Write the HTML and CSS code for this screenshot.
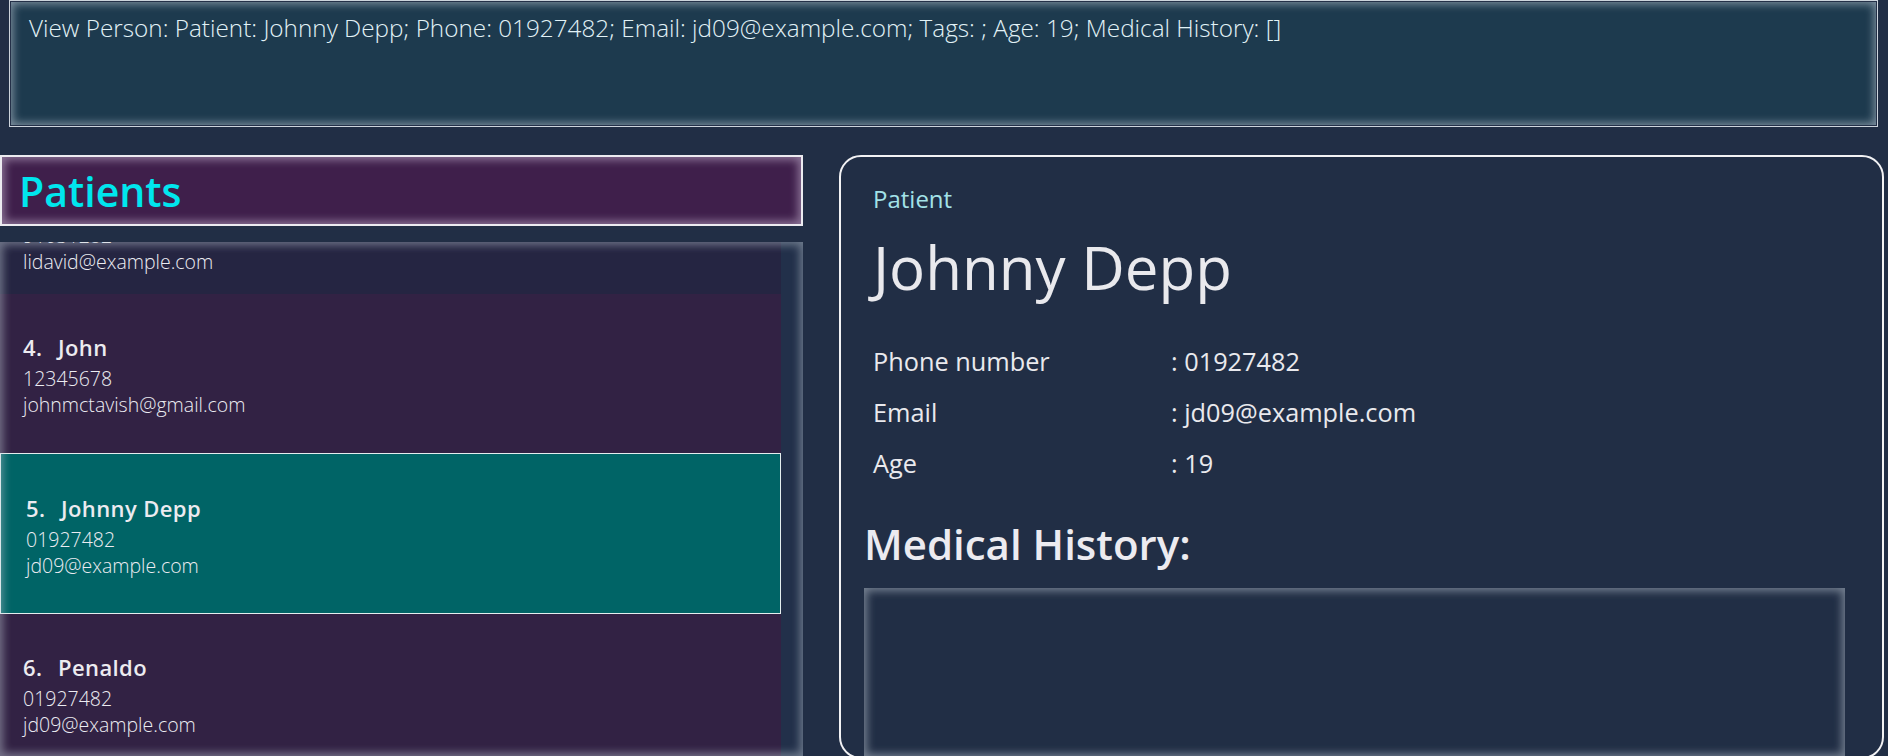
FILE: index.html
```html
<!DOCTYPE html>
<html lang="en">
<head>
<meta charset="utf-8">
<title>Patients</title>
<link rel="stylesheet" href="styles.css">
</head>
<body>
<div class="app">
  <div class="command-bar">
    <div class="command-inner">View Person: Patient: Johnny Depp; Phone: 01927482; Email: jd09@example.com; Tags: ; Age: 19; Medical History: []</div>
  </div>
  <div class="main">
    <div class="left">
      <div class="list-header"><span class="list-title">Patients</span></div>
      <div class="list">
        <div class="cells">
          <div class="cells-scroll">
            <div class="cell cell--even cell--short">
              <div class="cell-line">91031282</div>
              <div class="cell-line">lidavid@example.com</div>
            </div>
            <div class="cell cell--odd">
              <div class="cell-name"><span class="cell-idx">4.</span>John</div>
              <div class="cell-line">12345678</div>
              <div class="cell-line">johnmctavish@gmail.com</div>
            </div>
            <div class="cell cell--selected">
              <div class="cell-name"><span class="cell-idx">5.</span>Johnny Depp</div>
              <div class="cell-line">01927482</div>
              <div class="cell-line">jd09@example.com</div>
            </div>
            <div class="cell cell--odd">
              <div class="cell-name"><span class="cell-idx">6.</span>Penaldo</div>
              <div class="cell-line">01927482</div>
              <div class="cell-line">jd09@example.com</div>
            </div>
          </div>
        </div>
        <div class="scroll-track"></div>
      </div>
    </div>
    <div class="card">
      <div class="profile">
        <div class="profile-type">Patient</div>
        <div class="profile-name">Johnny Depp</div>
        <div class="profile-rows">
          <div class="row"><span class="row-label">Phone number</span><span class="row-value">: 01927482</span></div>
          <div class="row"><span class="row-label">Email</span><span class="row-value">: jd09@example.com</span></div>
          <div class="row"><span class="row-label">Age</span><span class="row-value">: 19</span></div>
        </div>
      </div>
      <div class="history-title">Medical History:</div>
      <div class="history-box"></div>
    </div>
  </div>
</div>
</body>
</html>
```
FILE: styles.css
```css
html, body {
  margin: 0;
  padding: 0;
}
body {
  background: #212e45;
  height: 756px;
  overflow: hidden;
  font-family: "Open Sans", "Noto Sans", "DejaVu Sans", sans-serif;
  color: #e8e8ec;
}
.app {
  display: flex;
  flex-direction: column;
  height: 756px;
}
.command-bar {
  box-sizing: border-box;
  height: 127px;
  margin: 0 10px 0 9px;
  border: 1px solid #cdd4dc;
  padding: 1px;
  background: #243048;
  flex: none;
}
.command-inner {
  box-sizing: border-box;
  height: 100%;
  background: #1d3a4e;
  box-shadow: inset 0 0 9px 2px rgba(205, 215, 225, 0.55);
  padding: 11px 18px;
  font-size: 24.3px;
  line-height: 30px;
  font-weight: 300;
  color: #e2f2f7;
  white-space: nowrap;
}
.main {
  display: flex;
  gap: 36px;
  margin-top: 28px;
  flex: 1;
  min-height: 0;
}
.left {
  width: 803px;
  flex: none;
  display: flex;
  flex-direction: column;
  gap: 16px;
}
.list-header {
  box-sizing: border-box;
  height: 71px;
  flex: none;
  border: 2px solid #ecebf0;
  background: #3f1f4b;
  box-shadow: inset 0 0 9px 3px rgba(215, 200, 225, 0.5);
  display: flex;
  align-items: center;
  padding-left: 17px;
}
.list-title {
  font-size: 41px;
  line-height: 50px;
  font-weight: 600;
  color: #00e6ee;
}
.list {
  flex: 1;
  min-height: 0;
  display: flex;
  position: relative;
  background: #22304a;
}
.list::after {
  content: "";
  position: absolute;
  inset: 0;
  pointer-events: none;
  box-shadow: inset 0 0 9px 3px rgba(200, 210, 220, 0.45);
}
.cells {
  width: 781px;
  flex: none;
  overflow: hidden;
}
.cells-scroll {
  margin-top: -40px;
}
.scroll-track {
  flex: 1;
}
.cell {
  box-sizing: border-box;
  height: 159px;
  padding: 38px 0 0 23px;
}
.cell--even {
  background: #252542;
}
.cell--short {
  height: 92px;
  padding-top: 21px;
}
.cell--odd {
  background: #322244;
}
.cell--selected {
  height: 161px;
  background: #006466;
  border: 1px solid #e4eeee;
  padding: 39px 0 0 25px;
}
.cell-name {
  font-size: 22px;
  line-height: 30px;
  font-weight: 600;
  color: #ecebf0;
  margin-bottom: 4px;
  letter-spacing: 0.4px;
}
.cell-idx {
  display: inline-block;
  width: 35px;
}
.cell-line {
  font-size: 19.5px;
  line-height: 26px;
  font-weight: 300;
  color: #ececf2;
}
.card {
  box-sizing: border-box;
  width: 1045px;
  height: 604px;
  flex: none;
  border: 2px solid #f2f2f4;
  border-radius: 22px;
  padding: 27px 37px 0 23px;
  display: flex;
  flex-direction: column;
}
.profile {
  padding-left: 9px;
}
.profile-type {
  font-size: 24px;
  line-height: 30px;
  color: #a3e2e8;
}
.profile-name {
  margin-top: 17px;
  font-size: 60px;
  line-height: 72px;
  font-weight: 500;
  color: #e9e9ed;
}
.profile-rows {
  margin-top: 33px;
}
.row {
  display: flex;
  font-size: 25.3px;
  line-height: 51px;
  color: #e9e9ed;
}
.row-label {
  width: 298px;
  flex: none;
}
.history-title {
  margin-top: 30px;
  font-size: 42px;
  line-height: 50px;
  font-weight: 600;
  color: #ecebf0;
}
.history-box {
  margin-top: 19px;
  flex: 1;
  background: #212e45;
  box-shadow: inset 0 0 9px 3px rgba(200, 210, 220, 0.5);
}
```
